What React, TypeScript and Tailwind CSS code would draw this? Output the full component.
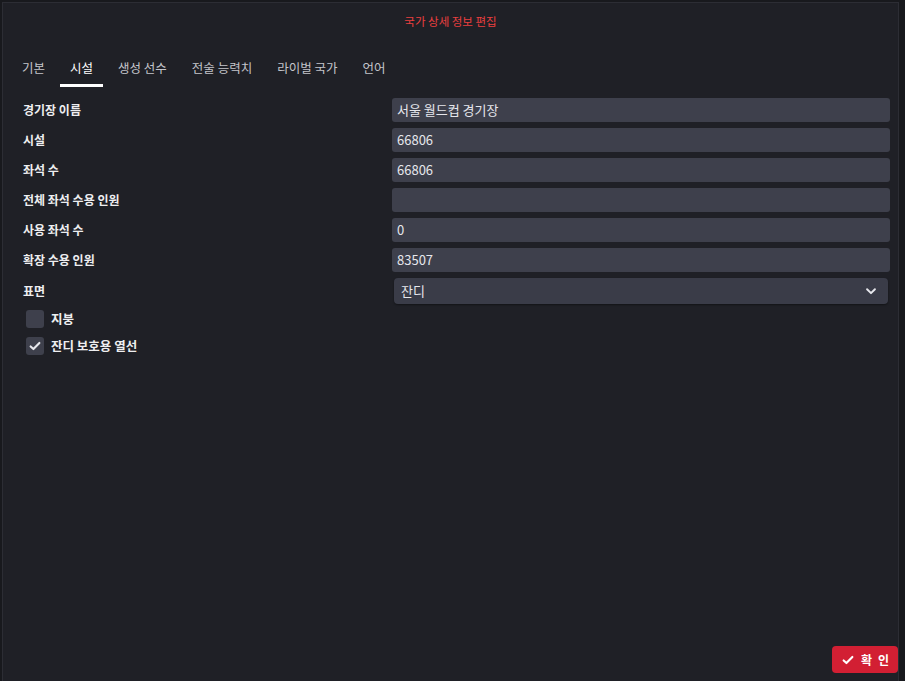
import { useState } from "react";

const font = { fontFamily: '"Noto Sans CJK KR", "Noto Sans", sans-serif' };

const tabs = ["기본", "시설", "생성 선수", "전술 능력치", "라이벌 국가", "언어"];

const fields = [
  { label: "경기장 이름", value: "서울 월드컵 경기장" },
  { label: "시설", value: "66806" },
  { label: "좌석 수", value: "66806" },
  { label: "전체 좌석 수용 인원", value: "" },
  { label: "사용 좌석 수", value: "0" },
  { label: "확장 수용 인원", value: "83507" },
];

function Check({ className }: { className?: string }) {
  return (
    <svg viewBox="0 0 16 16" className={className} fill="none" stroke="currentColor" strokeWidth="2.4" strokeLinecap="round" strokeLinejoin="round">
      <path d="M3 8.5l3.2 3L13 4.5" />
    </svg>
  );
}

export default function App() {
  const [active, setActive] = useState(1);
  const [roof, setRoof] = useState(false);
  const [heat, setHeat] = useState(true);

  return (
    <div className="w-[905px] h-[681px] bg-[#18191d] p-[2px] pr-[6px] pb-0" style={font}>
      <div className="h-full flex flex-col border border-[#2c2d34] border-b-0 bg-[#1f2026] relative">
        <div className="text-center text-[11.5px] text-[#ea3f3f] pt-[10px] h-[48px]">국가 상세 정보 편집</div>

        <div className="flex items-end gap-[5px] px-[9px] h-[38px]">
          {tabs.map((t, i) => (
            <button
              key={t}
              onClick={() => setActive(i)}
              className={`px-[10px] text-[12.5px] h-full flex flex-col justify-start pt-[8px] relative ${
                i === active ? "text-white" : "text-[#c4c5cb]"
              }`}
            >
              {t}
              {i === active && <span className="absolute left-0 right-0 bottom-[2px] h-[3px] bg-white" />}
            </button>
          ))}
        </div>

        <div className="flex flex-col gap-[6px] pt-[9px] pl-[20px] pr-[8px]">
          {fields.map((f) => (
            <div key={f.label} className="flex items-center h-[24px]">
              <div className="w-[369px] text-[12px] font-bold text-[#eeeef0]">{f.label}</div>
              <div className="flex-1 h-full bg-[#3e404c] rounded-[3px] px-[5px] flex items-center text-[13px] text-[#e6e7ec]">
                {f.value}
              </div>
            </div>
          ))}
          <div className="flex items-center h-[26px]">
            <div className="w-[371px] text-[12px] font-bold text-[#eeeef0]">표면</div>
            <div className="flex-1 mr-[2px] h-full bg-[#3a3c48] rounded-[4px] pl-[7px] pr-[10px] flex items-center justify-between text-[13px] text-[#e6e7ec] shadow-[0_1px_2px_rgba(0,0,0,0.4)]">
              <span>잔디</span>
              <svg viewBox="0 0 16 16" className="w-[14px] h-[14px] text-[#e6e7ec]" fill="none" stroke="currentColor" strokeWidth="2.2" strokeLinecap="round" strokeLinejoin="round">
                <path d="M3.5 6l4.5 4.5L12.5 6" />
              </svg>
            </div>
          </div>
        </div>

        <div className="flex flex-col gap-[8px] pt-[6px] pl-[23px]">
          <label className="flex items-center gap-[7px] cursor-pointer" onClick={() => setRoof(!roof)}>
            <span className="w-[18px] h-[18px] rounded-[3px] bg-[#3e404c] flex items-center justify-center text-[#e6e7ec]">
              {roof && <Check className="w-[14px] h-[14px]" />}
            </span>
            <span className="text-[12.5px] font-bold text-[#eeeef0]">지붕</span>
          </label>
          <label className="flex items-center gap-[7px] cursor-pointer" onClick={() => setHeat(!heat)}>
            <span className="w-[18px] h-[18px] rounded-[3px] bg-[#3e404c] flex items-center justify-center text-[#e6e7ec]">
              {heat && <Check className="w-[14px] h-[14px]" />}
            </span>
            <span className="text-[12.5px] font-bold text-[#eeeef0]">잔디 보호용 열선</span>
          </label>
        </div>

        <div className="flex-1" />
        <div className="flex justify-end pb-[8px] pr-[0px]">
          <button className="h-[27px] w-[66px] bg-[#d21f33] rounded-[4px] flex items-center justify-center gap-[6px] text-white text-[12px] font-bold">
            <Check className="w-[14px] h-[14px]" />
            <span className="tracking-[6px] mr-[-6px]">확인</span>
          </button>
        </div>
      </div>
    </div>
  );
}
